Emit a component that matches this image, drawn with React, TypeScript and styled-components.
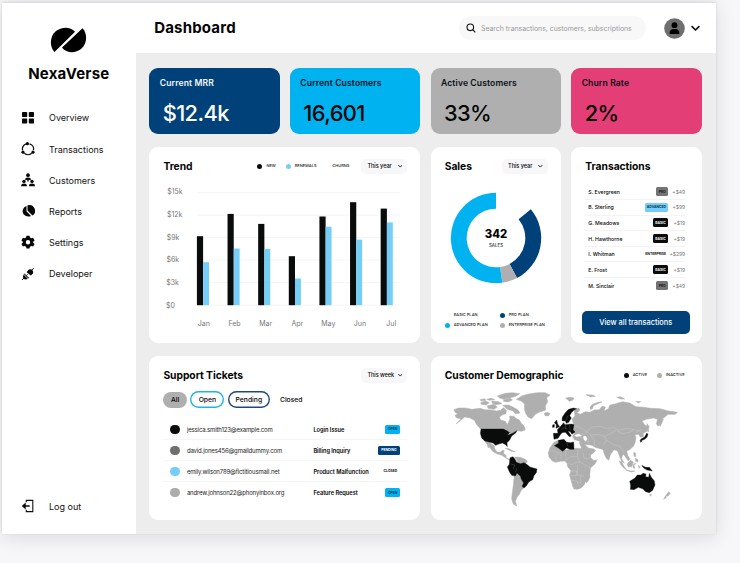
import React from "react";
import styled, { createGlobalStyle } from "styled-components";

const Global = createGlobalStyle`
  * { box-sizing: border-box; }
  html, body { margin: 0; padding: 0; }
  body { background: #f7f7f9; font-family: Inter, "Liberation Sans", sans-serif; color: #050505; overflow: hidden; }
  h1, h2, p { margin: 0; }
  button { font-family: inherit; color: inherit; border: 0; padding: 0; }
  svg { display: block; flex: none; }
`;

const Screen = styled.div`
  width: 740px;
  height: 563px;
  padding: 3px 0 0 2px;
  overflow: hidden;
`;

const Window = styled.div`
  width: 714px;
  height: 531px;
  display: grid;
  grid-template-columns: 133.6px 1fr;
  background: #ededed;
  box-shadow: 0 0 0 1px rgba(0, 0, 0, 0.015), 0 3px 18px 1px rgba(0, 0, 0, 0.11), 0 -2px 3px rgba(0, 0, 0, 0.06);
`;

const Sidebar = styled.aside`
  background: #fff;
  display: flex;
  flex-direction: column;
  padding: 24px 0 12px;
`;

const Brand = styled.div`
  display: flex;
  flex-direction: column;
  align-items: center;
  gap: 11px;
  height: 75.3px;
`;

const BrandName = styled.div`
  font-size: 15px;
  line-height: 20px;
  font-weight: 700;
  letter-spacing: 0.2px;
`;

const Nav = styled.nav`
  display: flex;
  flex-direction: column;
  flex: 1;
`;

const NavItem = styled.a`
  display: grid;
  grid-template-columns: 14px 1fr;
  column-gap: 14.5px;
  align-items: center;
  height: 31.15px;
  padding-left: 18.5px;
  font-size: 9px;
  letter-spacing: 0;
  color: #111;
`;

const Main = styled.main`
  display: flex;
  flex-direction: column;
  min-width: 0;
`;

const Header = styled.header`
  height: 50px;
  background: #fff;
  display: flex;
  align-items: center;
  padding: 0 16px 0 18.6px;
`;

const PageTitle = styled.h1`
  flex: 1;
  font-size: 15px;
  line-height: 20px;
  font-weight: 700;
  letter-spacing: 0.18px;
`;

const Search = styled.div`
  width: 187px;
  height: 24px;
  border-radius: 12px;
  background: #f8f8f9;
  display: flex;
  align-items: center;
  gap: 5px;
  padding-left: 7px;
  font-size: 6.9px;
  color: #999;
  white-space: nowrap;
`;

const Account = styled.div`
  display: flex;
  align-items: center;
  gap: 6px;
  margin-left: 18px;
`;

const Board = styled.div`
  display: grid;
  grid-template-columns: repeat(4, 1fr);
  grid-template-rows: 66.3px 195.6px 164px;
  gap: 13.2px 10.3px;
  padding: 15px 14.3px 0 13.8px;
`;

const Kpi = styled.section<{ $bg: string }>`
  border-radius: 9px;
  background: ${(p) => p.$bg};
  padding: 9px 0 0 10.3px;
`;

const KpiLabel = styled.h2<{ $light?: boolean }>`
  font-size: 8.6px;
  line-height: 13px;
  font-weight: 600;
  letter-spacing: 0.12px;
  color: ${(p) => (p.$light ? "#f1f6fb" : "#071018")};
`;

const KpiValue = styled.p<{ $light?: boolean }>`
  font-size: 21.8px;
  line-height: 26px;
  margin: 9.6px 0 0 3px;
  font-weight: 500;
  letter-spacing: -0.6px;
  color: ${(p) => (p.$light ? "#fff" : "#050505")};
`;

const Card = styled.section<{ $span?: number }>`
  grid-column: span ${(p) => p.$span ?? 1};
  background: #fff;
  border-radius: 9px;
  min-width: 0;
  display: flex;
  flex-direction: column;
`;

const CardHead = styled.div<{ $end?: number }>`
  display: flex;
  align-items: center;
  justify-content: space-between;
  height: 22px;
  margin: 8px ${(p) => p.$end ?? 13}px 0 14px;
`;

const CardTitle = styled.h2`
  font-size: 10.3px;
  line-height: 16px;
  font-weight: 700;
  letter-spacing: -0.04px;
  white-space: nowrap;
  padding-bottom: 1px;
`;

const HeadTools = styled.div`
  display: flex;
  align-items: center;
  gap: 12px;
`;

const Legend = styled.div<{ $gap: number }>`
  display: flex;
  gap: ${(p) => p.$gap}px;
`;

const LegendItem = styled.span`
  display: flex;
  align-items: center;
  gap: 4px;
  font-size: 4px;
  line-height: 6px;
  font-weight: 500;
  color: #222;
  white-space: nowrap;
`;

const Dot = styled.i<{ $color: string; $size?: number }>`
  width: ${(p) => p.$size ?? 5}px;
  height: ${(p) => p.$size ?? 5}px;
  border-radius: 50%;
  background: ${(p) => p.$color};
`;

const Select = styled.button`
  width: 46px;
  height: 15px;
  border-radius: 5px;
  background: #f7f7f9;
  display: flex;
  align-items: center;
  justify-content: space-between;
  padding: 0 5px 0 6px;
  font-size: 5.6px;
  font-weight: 500;
  letter-spacing: -0.05px;
`;

const Chart = styled.svg`
  text {
    font-family: Inter, sans-serif;
    font-size: 7px;
    fill: #777;
  }
`;

const DonutBox = styled.div`
  display: flex;
  justify-content: center;
  margin-top: 14.8px;
`;

const DonutText = styled.svg`
  text {
    font-family: Inter, sans-serif;
    text-anchor: middle;
  }
`;

const PlanLegend = styled.div`
  display: grid;
  grid-template-columns: 55px 1fr;
  row-gap: 4px;
  margin: 28px 0 0 14px;
`;

const TxList = styled.div`
  margin: 6.8px 16.5px 0 14px;
`;

const TxRow = styled.div`
  height: 15.65px;
  display: grid;
  grid-template-columns: 1fr auto 17px;
  align-items: center;
  padding-left: 3px;
  border-bottom: 1px solid #f3f3f3;
  font-size: 5.2px;
  font-weight: 500;
  &:last-child { border-bottom: 0; }
`;

const Amount = styled.span`
  color: #777;
  font-weight: 400;
  font-size: 5px;
  white-space: nowrap;
  display: flex;
  justify-content: flex-end;
`;

const Tag = styled.span<{ $bg: string; $fg: string; $w: number }>`
  width: ${(p) => p.$w}px;
  height: 9px;
  border-radius: 1.5px;
  background: ${(p) => p.$bg};
  color: ${(p) => p.$fg};
  display: flex;
  align-items: center;
  justify-content: center;
  font-size: 3.4px;
  font-weight: 700;
  white-space: nowrap;
`;

const ViewAll = styled.button`
  height: 23px;
  margin: 17.2px 12px 0 10.3px;
  border-radius: 5px;
  background: #00417a;
  color: #fff;
  font-size: 7.4px;
  font-weight: 500;
`;

const Filters = styled.div`
  display: flex;
  align-items: center;
  gap: 3.7px;
  margin: 5px 0 0 14px;
`;

const Filter = styled.button<{ $w: number; $bg?: string; $line?: string }>`
  width: ${(p) => p.$w}px;
  height: ${(p) => (p.$line ? 17 : 15.5)}px;
  border-radius: 9px;
  border: 0;
  box-shadow: ${(p) => (p.$line ? `inset 0 0 0 1.4px ${p.$line}` : "none")};
  background: ${(p) => p.$bg ?? "transparent"};
  font-size: 6.8px;
  font-weight: 500;
`;

const Tickets = styled.div`
  margin: 11.2px 13px 0 14px;
`;

const Ticket = styled.div`
  height: 20.95px;
  display: grid;
  grid-template-columns: 16.5px 126.5px 1fr auto;
  align-items: center;
  padding: 0 7.5px 0 7px;
  border-bottom: 1px solid #f5f5f5;
  white-space: nowrap;
  &:last-child { border-bottom: 0; }
`;

const Email = styled.span`
  font-size: 6px;
  color: #222;
  letter-spacing: -0.15px;
`;

const Subject = styled.span`
  font-size: 5.7px;
  font-weight: 600;
  letter-spacing: -0.03px;
`;

const MapBox = styled.div`
  padding: 0 0 0 13.6px;
  margin-top: -1.3px;
`;

const Chevron = ({ size = 4.6, weight = 2.4 }: { size?: number; weight?: number }) => (
  <svg width={size} height={size} viewBox="0 0 12 12" fill="none" stroke="#111" strokeWidth={weight}>
    <path d="M1.5 3.5 6 8l4.500-4.500" strokeLinecap="round" strokeLinejoin="round" />
  </svg>
);

const Logo = () => (
  <svg width="37" height="26" viewBox="0 0 37 26">
    <path d="M4.500 25C-1 19 0 9 6 4 11 0 20-1 25 4.800Z" />
    <path d="M32.500 1.200C38 7 37 17 31 22 26 26 17 27 12 20.500Z" />
  </svg>
);

const icons: Record<string, React.ReactNode> = {
  Overview: (
    <g>
      <rect x="1" y="1" width="5.200" height="5" rx=".8" />
      <rect x="7.800" y="1" width="5.200" height="5" rx=".8" />
      <rect x="1" y="7.600" width="5.200" height="5" rx=".8" />
      <rect x="7.800" y="7.600" width="5.200" height="5" rx=".8" />
    </g>
  ),
  Transactions: (
    <g>
      <path
        d="M8.500 1.800A5.500 5.500 0 0 1 12.500 8.200M10.700 11.300A5.500 5.500 0 0 1 3.400 11.300M1.500 8.400A5.500 5.500 0 0 1 5.300 1.800"
        fill="none"
        stroke="#111"
        strokeWidth="1.300"
      />
      <circle cx="6.400" cy="1.700" r="1.600" />
      <circle cx="2" cy="10.200" r="1.600" />
      <circle cx="12" cy="10.200" r="1.600" />
    </g>
  ),
  Customers: (
    <g>
      <circle cx="7" cy="2.200" r="1.900" />
      <path d="M4.200 7.200V6Q4.200 4.400 7 4.400T9.800 6v1.200L7.700 6.700V8.400H6.300V6.700Z" />
      <circle cx="3" cy="8.400" r="1.700" />
      <circle cx="11" cy="8.400" r="1.700" />
      <path d="M.2 13.200v-1Q.2 10.500 3 10.500T5.900 12.200v1ZM8.100 13.200v-1Q8.100 10.500 11 10.500T13.800 12.200v1Z" />
    </g>
  ),
  Reports: (
    <g>
      <path d="M6.500 1.300V6.600l4.900 4.900A5.700 5.700 0 0 0 6.500 1.300Z" />
      <path d="M5.500 1.900A5.600 5.600 0 0 0 2.800 10.600Q5.800 13.500 10 12L5.500 7.300Z" />
    </g>
  ),
  Settings: (
    <path
      fillRule="evenodd"
      d="M5.500.7h3l.5 1.900 1.200.7 1.900-.5 1.500 2.600L12.200 6.700v1l1.400 1.300-1.500 2.600-1.900-.5-1.200.7-.5 1.700h-3L5 11.800l-1.200-.7-1.900.5L.4 9l1.400-1.300v-1L.4 5.400l1.500-2.600 1.900.5L5 2.600ZM7 5a2.200 2.200 0 1 0 0 4.400A2.200 2.200 0 0 0 7 5Z"
    />
  ),
  Developer: (
    <g>
      <path d="M1 13 3 11M11 3 12.700 1.200M5.300 8.700 6.700 7.300" stroke="#111" strokeWidth="1" />
      <path d="M2.500 7.600 6.800 11.700Q4.600 13 2.700 11.800 1.300 10 2.500 7.600Z" />
      <path d="M2.700 7 7.400 11.600 8 10.800 3.500 6.400Z" />
      <path d="M6.300 4.300Q7.800 1.600 10.600 2.600 13 4.300 11.800 6.700L9.800 8.400 5.600 5.300Z" />
    </g>
  ),
  "Log out": (
    <g>
      <path d="M5.300 3.200V1.400H11.800V12.600H5.300V10.800" fill="none" stroke="#111" strokeWidth="1.100" />
      <path d="M.8 7 4.700 3.600V6.300H8.700V7.700H4.700v2.700Z" />
    </g>
  ),
};

const Icon = ({ name }: { name: string }) => (
  <svg width="14" height="14" viewBox="0 0 14 14" fill="#080808">
    {icons[name]}
  </svg>
);

const nav = ["Overview", "Transactions", "Customers", "Reports", "Settings", "Developer"];

const months = [
  { name: "Jan", x: 204.2, a: 69, b: 43 },
  { name: "Feb", x: 234.9, a: 91.3, b: 56.7 },
  { name: "Mar", x: 266.1, a: 81.3, b: 56.3 },
  { name: "Apr", x: 297.7, a: 49, b: 26.7 },
  { name: "May", x: 328.7, a: 88.7, b: 78.5 },
  { name: "Jun", x: 360.3, a: 103, b: 65.5 },
  { name: "Jul", x: 391.7, a: 96.6, b: 82.8 },
];

const ticks = ["$0", "$3k", "$6k", "$9k", "$12k", "$15k"];

const TrendChart = () => (
  <Chart width="271" height="155" viewBox="149.400 177.500 271 155">
    {ticks.map((t, i) => (
      <g key={t}>
        <path d={`M197.500 ${305.6 - i * 22.5}H400`} stroke="#f3f3f3" strokeWidth=".8" />
        <text x={166.3 + i * 0.26} y={308.2 - i * 22.65}>{t}</text>
      </g>
    ))}
    {months.map((m, i) => (
      <g key={m.name}>
        <rect x={197.3 + i * 30.63} y={305.7 - m.a} width="6.200" height={m.a} fill="#0a0b0b" />
        <rect x={203.5 + i * 30.63} y={305.7 - m.b} width="5.900" height={m.b} fill="#74cef8" />
        <text x={m.x} y="326.700" textAnchor="middle">{m.name}</text>
      </g>
    ))}
  </Chart>
);

const arc = (from: number, to: number) => {
  const pt = (r: number, deg: number) => {
    const t = (deg * Math.PI) / 180;
    return `${(46 + r * Math.sin(t)).toFixed(2)} ${(46 - r * Math.cos(t)).toFixed(2)}`;
  };
  const big = to - from > 180 ? 1 : 0;
  return `M${pt(45.2, from)}A45.2 45.2 0 ${big} 1 ${pt(45.2, to)}L${pt(29.3, to)}A29.3 29.3 0 ${big} 0 ${pt(29.3, from)}Z`;
};

const Donut = () => (
  <DonutText width="92" height="92" viewBox="0 0 92 92">
    <path d={arc(50.4, 152.3)} fill="#00417a" />
    <path d={arc(152.3, 172)} fill="#b0aeb0" />
    <path d={arc(172, 360)} fill="#00b3f0" />
    <text x="46" y="46.300" fontSize="11.300" fontWeight="800">342</text>
    <text x="46" y="55.300" fontSize="4.500">SALES</text>
  </DonutText>
);

const transactions = [
  ["S. Evergreen", "PRO", "+$49"],
  ["B. Sterling", "ADVANCED", "+$99"],
  ["G. Meadows", "BASIC", "+$19"],
  ["H. Hawthorne", "BASIC", "+$19"],
  ["I. Whitman", "ENTERPRISE", "+$299"],
  ["E. Frost", "BASIC", "+$19"],
  ["M. Sinclair", "PRO", "+$49"],
];

const planTag: Record<string, { bg: string; fg: string; w: number }> = {
  PRO: { bg: "#747474", fg: "#1c1c1c", w: 12 },
  ADVANCED: { bg: "#74cef8", fg: "#063350", w: 23.5 },
  BASIC: { bg: "#0a0b0b", fg: "#fff", w: 15.5 },
  ENTERPRISE: { bg: "transparent", fg: "#111", w: 25 },
};

const tickets = [
  ["#0a0b0b", "jessica.smith123@example.com", "Login Issue", "OPEN"],
  ["#6f6f6f", "david.jones456@gmaildummy.com", "Billing Inquiry", "PENDING"],
  ["#74cef8", "emily.wilson789@fictitiousmail.net", "Product Malfunction", "CLOSED"],
  ["#adadad", "andrew.johnson22@phonyinbox.org", "Feature Request", "OPEN"],
];

const stateTag: Record<string, { bg: string; fg: string; w: number }> = {
  OPEN: { bg: "#00b3f0", fg: "#063350", w: 14.5 },
  PENDING: { bg: "#00417a", fg: "#fff", w: 22 },
  CLOSED: { bg: "transparent", fg: "#111", w: 19 },
};

const inactiveLand = [
  // Alaska and Canada
  "M30 74 44 69 62 69 84 73 108 70 122 74 142 75 158 78 170 76 178 68 187 75 186 86 174 90 166 97 170 105 184 109 190 119 194 111 198 101 197 93 209 94 218 101 226 105 232 115 240 123 244 135 232 139 221 137 214 144 204 149 196 143 184 137 110 132 98 119 91 106 76 98 62 96 48 108 36 117 51 102 37 98 33 91 41 87 32 80Z",
  // Canadian Arctic islands
  "M110 53 124 48 136 53 126 60 112 58ZM130 62 150 58 160 66 150 73 132 70ZM143 48 164 50 174 56 156 59 145 55ZM160 33 184 25 206 23 227 26 215 34 196 39 178 43 166 38ZM180 44 200 40 205 45 192 51 178 49ZM176 61 194 60 208 67 222 75 228 84 214 86 206 77 190 73ZM108 44 122 41 126 46 112 48ZM128 43 142 40 152 44 136 46Z",
  // Greenland, Iceland, Svalbard
  "M217 43 235 32 254 27 280 23 303 23 318 30 308 38 311 50 304 63 305 75 287 81 274 88 263 101 252 96 245 85 241 71 242 58 233 49ZM301 85 310 82 318 86 314 92 303 92ZM365 39 378 37 390 39 386 46 376 49ZM426 29 445 30 454 34 440 36Z",
  // Mexico, Central America, Caribbean
  "M122 169 138 174 150 182 153 193 159 201 169 202 175 196 181 197 178 205 185 210 187 218 195 223 202 221 199 227 187 220 174 211 158 206 146 199 137 187 129 176ZM184 190 195 191 207 198 214 200 202 199ZM128 174 136 188 132 187Z",
  // Andes and northern coast
  "M212 216 228 217 242 222 250 229 244 237 228 240 218 226ZM211 270 222 266 234 276 236 288 245 298 239 309 232 316 226 328 220 335 214 348 218 363 208 357 203 342 205 323 208 301Z",
  // Africa
  "M330 172 343 166 355 187 365 196 389 190 432 192 439 203 440 218 450 227 460 224 452 238 439 249 438 263 434 280 424 288 422 298 411 309 401 313 390 312 386 303 381 286 377 270 381 257 371 245 369 235 363 228 349 229 335 232 325 228 315 216 313 203 318 188ZM429 274 436 264 438 276 432 289 427 294 424 288Z",
  // Eurasian mainland
  "M390 74 405 69 407 77 398 83 409 88 424 80 438 82 451 75 466 74 474 64 484 66 480 78 493 71 498 60 515 56 536 50 557 54 576 65 599 67 620 70 648 71 670 77 700 82 694 88 672 88 660 98 649 101 650 115 642 124 637 116 641 103 628 99 607 103 594 108 602 119 609 125 610 139 598 144 598 155 590 157 583 148 573 149 576 159 573 174 568 184 557 194 548 198 551 211 558 222 552 227 544 215 538 207 532 219 541 235 533 230 525 210 521 198 510 194 500 207 494 226 487 220 480 205 478 195 469 191 453 187 444 181 433 179 420 178 409 174 406 168 391 164 386 154 392 145 383 137 382 126 389 117 384 103 393 93Z",
  // Arabia
  "M406 173 421 177 433 189 449 192 455 197 444 207 427 216 419 204Z",
  // Kamchatka, Sakhalin, Novaya Zemlya
  "M640 101 655 98 658 103 649 124 642 114ZM609 116 615 124 613 141 608 129ZM440 74 438 66 446 58 462 52 474 50 462 56 448 62 446 70ZM518 37 529 35 542 42 531 42ZM575 49 590 50 584 54Z",
  // South-east Asia
  "M526 228 533 232 541 245 548 254 538 248 530 238ZM549 237 560 226 568 232 563 245 553 246ZM545 255 561 258 573 258 562 261ZM569 202 575 205 575 216 570 213ZM574 220 582 224 582 231 575 229ZM568 238 576 235 570 241 573 250 567 248ZM583 241 589 246 585 250Z",
  // New Zealand
  "M674 320 679 325 671 334 665 332ZM664 333 668 337 659 343ZM617 328 623 329 619 334Z",
];

const activeLand = [
  // United States
  "M111 132 178 132 190 138 197 143 190 151 208 144 218 137 215 144 203 153 197 165 189 173 190 185 185 179 175 174 162 178 155 181 147 174 137 172 122 168 113 159 109 145Z",
  // Colombia, Peru, Brazil
  "M198 218 207 215 212 221 218 232 229 236 240 233 248 238 258 246 279 252 277 263 270 272 266 284 255 290 247 303 240 309 234 304 239 294 232 283 229 273 219 265 214 273 203 271 196 260 190 246 196 238Z",
  // Scandinavia, Britain, Western Europe
  "M354 107 355 96 365 82 374 73 388 69 398 71 390 75 382 83 377 92 382 99 374 112 367 115 364 108ZM331 113 338 105 341 117 347 125 336 130 337 119ZM326 120 331 118 331 127 325 127ZM350 124 359 113 363 119 382 117 390 119 387 134 393 141 384 148 379 140 372 138 382 153 376 155 364 142 354 143 350 148 342 160 330 163 328 145 342 145 340 134Z",
  // Algeria, Tunisia, Libya
  "M331 182 344 174 343 166 360 163 367 171 379 173 389 171 390 193 377 193 368 189 356 199 342 188Z",
  // Japan
  "M608 145 612 147 609 157 602 163 591 167 590 163 602 156ZM588 165 594 168 590 172Z",
  // New Guinea
  "M593 241 605 247 616 247 625 258 609 255 599 249Z",
  // Australia
  "M557 289 572 280 580 270 591 270 597 265 606 267 605 275 614 277 616 265 622 277 631 288 633 300 626 316 616 323 605 320 597 312 583 307 570 314 559 313 560 301Z",
];

const borders =
  "M316 198H332L345 208 355 200M336 210V231M350 208 352 229M365 198 366 226 380 214 400 216 402 194M368 236 386 238 404 230 420 238 438 248M402 217 406 231M418 205 420 220 436 220M380 258H398V272H380M400 240V270L420 274M410 274V294L398 292M384 286 398 288 404 302M382 125 400 124 415 132 428 140 420 148 404 146M430 137 445 126 470 124 485 130 510 128 525 136 548 130 570 134 590 138M428 140 442 150 462 148 482 154 500 146 516 136M480 154 488 166 478 180M488 166 510 180 528 184 538 200M415 160 430 160 436 176M438 150 450 164 452 184M404 150 414 160M518 136 534 146 558 142 570 134M578 140 592 133";

const WorldMap = () => (
  <svg width="245" height="130" viewBox="0 0 735 390">
    <g fill="#afafaf" stroke="#afafaf" strokeWidth="1.500" strokeLinejoin="round">
      {inactiveLand.map((d) => (
        <path key={d} d={d} />
      ))}
    </g>
    <path d={borders} fill="none" stroke="#d0d0d0" strokeWidth="1.200" />
    <path d="M417 155 424 152 430 160 426 170 420 165ZM391 151 404 146 414 153 397 155Z" fill="#fff" />
    <g fill="#0a0b0b" stroke="#0a0b0b" strokeWidth="1" strokeLinejoin="round">
      {activeLand.map((d) => (
        <path key={d} d={d} />
      ))}
    </g>
    <path d="M200 237 212 240 208 252M214 262 219 250M352 132 362 128 370 133M364 120 365 132M376 120 378 134M368 172 372 184M365 108 372 92" fill="none" stroke="#777" strokeWidth="1" />
  </svg>
);

export default function App() {
  return (
    <Screen>
      <Global />
      <Window>
        <Sidebar>
          <Brand>
            <Logo />
            <BrandName>NexaVerse</BrandName>
          </Brand>
          <Nav>
            {nav.map((n) => (
              <NavItem key={n}>
                <Icon name={n} />
                {n}
              </NavItem>
            ))}
          </Nav>
          <NavItem>
            <Icon name="Log out" />
            Log out
          </NavItem>
        </Sidebar>
        <Main>
          <Header>
            <PageTitle>Dashboard</PageTitle>
            <Search>
              <svg width="10" height="10" viewBox="0 0 10 10" fill="none" stroke="#111" strokeWidth="1.100">
                <circle cx="4.300" cy="4.300" r="3.300" />
                <path d="m6.700 6.700 2.600 2.600" />
              </svg>
              Search transactions, customers, subscriptions
            </Search>
            <Account>
              <svg width="21" height="21" viewBox="0 0 21 21">
                <circle cx="10.500" cy="10.500" r="10.300" fill="#6f6f6f" />
                <circle cx="10.500" cy="7.200" r="2.900" />
                <path d="M5.700 16V14Q6 11 10.500 11T15.300 14v2Z" />
              </svg>
              <Chevron size={9} weight={2.2} />
            </Account>
          </Header>
          <Board>
            <Kpi $bg="#00417a">
              <KpiLabel $light>Current MRR</KpiLabel>
              <KpiValue $light>$12.4k</KpiValue>
            </Kpi>
            <Kpi $bg="#00b3f0">
              <KpiLabel>Current Customers</KpiLabel>
              <KpiValue>16,601</KpiValue>
            </Kpi>
            <Kpi $bg="#afafaf">
              <KpiLabel>Active Customers</KpiLabel>
              <KpiValue>33%</KpiValue>
            </Kpi>
            <Kpi $bg="#e33f76">
              <KpiLabel>Churn Rate</KpiLabel>
              <KpiValue>2%</KpiValue>
            </Kpi>

            <Card $span={2}>
              <CardHead>
                <CardTitle>Trend</CardTitle>
                <HeadTools>
                  <Legend $gap={9.8}>
                    <LegendItem><Dot $color="#0a0b0b" />NEW</LegendItem>
                    <LegendItem><Dot $color="#74cef8" />RENEWALS</LegendItem>
                    <LegendItem><Dot $color="transparent" $size={2} />CHURNS</LegendItem>
                  </Legend>
                  <Select>This year <Chevron /></Select>
                </HeadTools>
              </CardHead>
              <TrendChart />
            </Card>

            <Card>
              <CardHead>
                <CardTitle>Sales</CardTitle>
                <Select>This year <Chevron /></Select>
              </CardHead>
              <DonutBox><Donut /></DonutBox>
              <PlanLegend>
                <LegendItem><Dot $color="transparent" />BASIC PLAN</LegendItem>
                <LegendItem><Dot $color="#00417a" />PRO PLAN</LegendItem>
                <LegendItem><Dot $color="#00b3f0" />ADVANCED PLAN</LegendItem>
                <LegendItem><Dot $color="#afafaf" />ENTERPRISE PLAN</LegendItem>
              </PlanLegend>
            </Card>

            <Card>
              <CardHead>
                <CardTitle>Transactions</CardTitle>
              </CardHead>
              <TxList>
                {transactions.map(([who, plan, sum]) => (
                  <TxRow key={who}>
                    {who}
                    <Tag $bg={planTag[plan].bg} $fg={planTag[plan].fg} $w={planTag[plan].w}>{plan}</Tag>
                    <Amount>{sum}</Amount>
                  </TxRow>
                ))}
              </TxList>
              <ViewAll>View all transactions</ViewAll>
            </Card>

            <Card $span={2}>
              <CardHead>
                <CardTitle>Support Tickets</CardTitle>
                <Select>This week <Chevron /></Select>
              </CardHead>
              <Filters>
                <Filter $w={23.3} $bg="#afafaf">All</Filter>
                <Filter $w={34} $line="#20b5dd">Open</Filter>
                <Filter $w={41.5} $line="#1f4a78">Pending</Filter>
                <Filter $w={36}>Closed</Filter>
              </Filters>
              <Tickets>
                {tickets.map(([color, email, subject, state]) => (
                  <Ticket key={email}>
                    <Dot $color={color} $size={9.3} />
                    <Email>{email}</Email>
                    <Subject>{subject}</Subject>
                    <Tag $bg={stateTag[state].bg} $fg={stateTag[state].fg} $w={stateTag[state].w}>{state}</Tag>
                  </Ticket>
                ))}
              </Tickets>
            </Card>

            <Card $span={2}>
              <CardHead $end={17}>
                <CardTitle>Customer Demographic</CardTitle>
                <Legend $gap={9.8}>
                  <LegendItem><Dot $color="#0a0b0b" />ACTIVE</LegendItem>
                  <LegendItem><Dot $color="#afafaf" />INACTIVE</LegendItem>
                </Legend>
              </CardHead>
              <MapBox><WorldMap /></MapBox>
            </Card>
          </Board>
        </Main>
      </Window>
    </Screen>
  );
}
